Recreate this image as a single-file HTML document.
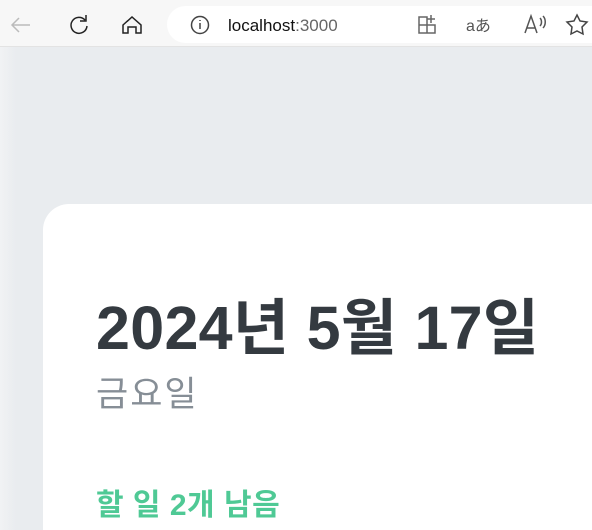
<!DOCTYPE html>
<html><head><meta charset="utf-8"><style>
html,body{margin:0;width:592px;height:530px;overflow:hidden}
body{background:#e9ecef;font-family:"Liberation Sans","Noto Sans CJK KR",sans-serif;position:relative}
.bar{position:absolute;left:0;top:0;width:592px;height:46px;background:#f7f7f7;border-bottom:1px solid #e3e3e3}
.addr{position:absolute;left:167px;top:6px;width:460px;height:37px;border-radius:19px;background:#fff}
.shadow{position:absolute;left:0;top:47px;width:16px;height:483px;background:linear-gradient(90deg,#f1f2f4,#e9ecef)}
.card{position:absolute;left:43px;top:204px;width:600px;height:326px;background:#fff;border-radius:26px 0 0 0}
h1{position:absolute;left:96px;top:278px;margin:0;font-size:61px;font-weight:bold;color:#343a40;white-space:nowrap;letter-spacing:0.3px}
.day{position:absolute;left:96px;top:366px;font-size:35px;color:#868e96;letter-spacing:2px}
.left{position:absolute;left:96px;top:480px;font-size:30px;font-weight:bold;color:#4fc995;letter-spacing:0.5px}
svg{position:absolute}
</style></head><body>
<div class="bar"></div>
<div class="addr"></div>
<svg width="592" height="46" style="left:0;top:0" fill="none" stroke="#222" stroke-width="1.5">
<path d="M30 25H12M19 18l-7 7 7 7" stroke="#bbb"/>
<path d="M85 20a8 8 0 1 0 2 6M86 15v6h-6"/>
<path d="M123 25l9-8 9 8v8h-5v-6h-8v6h-5z"/>
<circle cx="200" cy="25" r="8.5" stroke="#444"/><path d="M200 23v6M200 20v1" stroke="#444"/>
<path d="M419 17h8v16h-8zM419 25h16v8h-8M431 15v8M427 19h8" stroke="#666"/>
<path d="M525 33l6-17 6 17M527 28h8M540 18c2 2 2 6 0 8M543 16c3 3 3 9 0 12" stroke="#555"/>
<path d="M577 15l3 6 7 1-5 5 1 7-6-3-6 3 1-7-5-5 7-1z" stroke="#444"/>
<text x="228" y="31" font-size="17" fill="#111" stroke="none" font-family="Liberation Sans">localhost<tspan fill="#666">:3000</tspan></text>
<text x="466" y="31" font-size="16" fill="#555" stroke="none" font-family="Liberation Sans,Noto Sans CJK JP">aあ</text>
</svg>
<div class="shadow"></div>
<div class="card"></div>
<h1>2024년 5월 17일</h1>
<div class="day">금요일</div>
<div class="left">할 일 2개 남음</div>
</body></html>
